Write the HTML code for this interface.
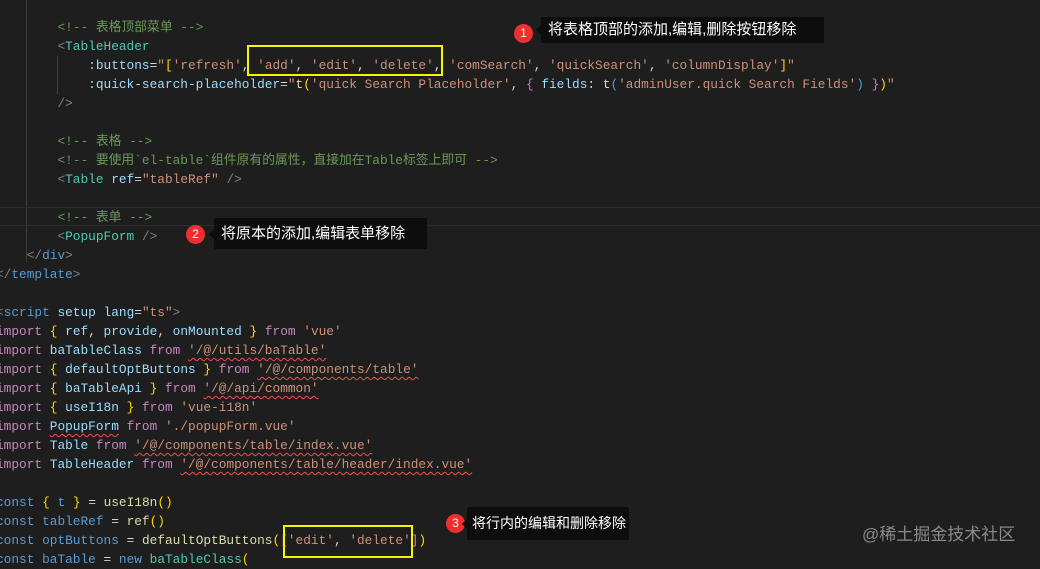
<!DOCTYPE html>
<html><head><meta charset="utf-8"><style>
html,body{margin:0;padding:0;}
body{width:1040px;height:564px;background:#1e1e1e;position:relative;overflow:hidden;font-family:"Liberation Mono","Noto Sans CJK SC",monospace;font-size:12.8px;}
.l{position:absolute;left:-4px;height:19px;line-height:19px;white-space:pre;color:#d4d4d4;margin-top:0.5px}
.c{color:#6a9955}.g{color:#808080}.t{color:#4ec9b0}.a{color:#9cdcfe}.s{color:#ce9178}.k{color:#c586c0}.b{color:#569cd6}.f{color:#dcdcaa}.y{color:#ffd700}.p{color:#da70d6}.w{color:#d4d4d4}
.u{text-decoration:underline wavy #f14c4c;text-underline-offset:3px;text-decoration-thickness:1px}
.box{position:absolute;border:2px solid #f5f500;box-sizing:border-box}
.badge{position:absolute;width:19px;height:19px;border-radius:50%;background:#ee2f2f;color:#fff;font:12px "Liberation Sans",sans-serif;text-align:center;line-height:19px}
.tip{position:absolute;background:#0d0d0d;color:#fff;font:15px "Liberation Sans","Noto Sans CJK SC",sans-serif;box-sizing:border-box;padding-left:7px;border-radius:2px;white-space:nowrap;overflow:visible}
.tip:before{content:"";position:absolute;left:-5px;top:50%;margin-top:-5px;border:5px solid transparent;border-left:0;border-right-color:#0d0d0d}
</style></head><body>
<div style="position:absolute;left:26px;top:0;width:1px;height:262px;background:#404040"></div>
<div style="position:absolute;left:57px;top:56px;width:1px;height:38px;background:#404040"></div>
<div style="position:absolute;left:0;top:207px;width:1040px;height:19px;border-top:1px solid #2c2c2c;border-bottom:1px solid #2c2c2c;box-sizing:border-box"></div>

<div class="l" style="top:17.5px">        <span class="c">&lt;!-- 表格顶部菜单 --&gt;</span></div>
<div class="l" style="top:36.5px">        <span class="g">&lt;</span><span class="t">TableHeader</span></div>
<div class="l" style="top:55.5px">            <span class="a">:buttons</span>=<span class="s">"</span><span class="y">[</span><span class="s">'refresh'</span>, <span class="s">'add'</span>, <span class="s">'edit'</span>, <span class="s">'delete'</span>, <span class="s">'comSearch'</span>, <span class="s">'quickSearch'</span>, <span class="s">'columnDisplay'</span><span class="y">]</span><span class="s">"</span></div>
<div class="l" style="top:74.5px">            <span class="a">:quick-search-placeholder</span>=<span class="s">"</span><span class="f">t</span><span class="y">(</span><span class="s">'quick Search Placeholder'</span>, <span class="p">{</span> <span class="a">fields</span>: <span class="f">t</span><span class="b">(</span><span class="s">'adminUser.quick Search Fields'</span><span class="b">)</span> <span class="p">}</span><span class="y">)</span><span class="s">"</span></div>
<div class="l" style="top:93.5px">        <span class="g">/&gt;</span></div>
<div class="l" style="top:131.5px">        <span class="c">&lt;!-- 表格 --&gt;</span></div>
<div class="l" style="top:150.5px">        <span class="c">&lt;!-- 要使用`el-table`组件原有的属性，直接加在Table标签上即可 --&gt;</span></div>
<div class="l" style="top:169.5px">        <span class="g">&lt;</span><span class="t">Table</span> <span class="a">ref</span>=<span class="s">"tableRef"</span> <span class="g">/&gt;</span></div>
<div class="l" style="top:207.5px">        <span class="c">&lt;!-- 表单 --&gt;</span></div>
<div class="l" style="top:226.5px">        <span class="g">&lt;</span><span class="t">PopupForm</span> <span class="g">/&gt;</span></div>
<div class="l" style="top:245.5px">    <span class="g">&lt;/</span><span class="b">div</span><span class="g">&gt;</span></div>
<div class="l" style="top:264.5px"><span class="g">&lt;/</span><span class="b">template</span><span class="g">&gt;</span></div>
<div class="l" style="top:302.5px"><span class="g">&lt;</span><span class="b">script</span> <span class="a">setup</span> <span class="a">lang</span>=<span class="s">"ts"</span><span class="g">&gt;</span></div>
<div class="l" style="top:321.5px"><span class="k">import</span> <span class="y">{</span> <span class="a">ref</span>, <span class="a">provide</span>, <span class="a">onMounted</span> <span class="y">}</span> <span class="k">from</span> <span class="s">'vue'</span></div>
<div class="l" style="top:340.5px"><span class="k">import</span> <span class="a">baTableClass</span> <span class="k">from</span> <span class="s u">'/@/utils/baTable'</span></div>
<div class="l" style="top:359.5px"><span class="k">import</span> <span class="y">{</span> <span class="a">defaultOptButtons</span> <span class="y">}</span> <span class="k">from</span> <span class="s u">'/@/components/table'</span></div>
<div class="l" style="top:378.5px"><span class="k">import</span> <span class="y">{</span> <span class="a">baTableApi</span> <span class="y">}</span> <span class="k">from</span> <span class="s u">'/@/api/common'</span></div>
<div class="l" style="top:397.5px"><span class="k">import</span> <span class="y">{</span> <span class="a">useI18n</span> <span class="y">}</span> <span class="k">from</span> <span class="s">'vue-i18n'</span></div>
<div class="l" style="top:416.5px"><span class="k">import</span> <span class="a u">PopupForm</span> <span class="k">from</span> <span class="s">'./popupForm.vue'</span></div>
<div class="l" style="top:435.5px"><span class="k">import</span> <span class="a">Table</span> <span class="k">from</span> <span class="s u">'/@/components/table/index.vue'</span></div>
<div class="l" style="top:454.5px"><span class="k">import</span> <span class="a">TableHeader</span> <span class="k">from</span> <span class="s u">'/@/components/table/header/index.vue'</span></div>
<div class="l" style="top:492.5px"><span class="b">const</span> <span class="y">{</span> <span class="b">t</span> <span class="y">}</span> = <span class="f">useI18n</span><span class="y">()</span></div>
<div class="l" style="top:511.5px"><span class="b">const</span> <span class="b">tableRef</span> = <span class="f">ref</span><span class="y">()</span></div>
<div class="l" style="top:530.5px"><span class="b">const</span> <span class="b">optButtons</span> = <span class="f">defaultOptButtons</span><span class="y">(</span><span class="p">[</span><span class="s">'edit'</span>, <span class="s">'delete'</span><span class="p">]</span><span class="y">)</span></div>
<div class="l" style="top:549.5px"><span class="b">const</span> <span class="b">baTable</span> = <span class="b">new</span> <span class="t">baTableClass</span><span class="y">(</span></div>

<div class="box" style="left:247px;top:45px;width:196px;height:31px"></div>
<div class="box" style="left:283px;top:525px;width:130px;height:33px"></div>

<div class="badge" style="left:514px;top:24px">1</div>
<div class="tip" style="left:541px;top:17px;width:283px;height:26px;line-height:26px">将表格顶部的添加,编辑,删除按钮移除</div>
<div class="badge" style="left:186px;top:225px">2</div>
<div class="tip" style="left:214px;top:218px;width:213px;height:31px;line-height:31px">将原本的添加,编辑表单移除</div>
<div class="badge" style="left:446px;top:514px">3</div>
<div class="tip" style="left:467px;top:507px;width:162px;height:33px;line-height:33px;padding-left:5px;font-size:14px">将行内的编辑和删除移除</div>

<div style="position:absolute;left:862px;top:523px;color:#8a8a8a;font:17px 'Liberation Sans','Noto Sans CJK SC',sans-serif;line-height:24px">@稀土掘金技术社区</div>
</body></html>
